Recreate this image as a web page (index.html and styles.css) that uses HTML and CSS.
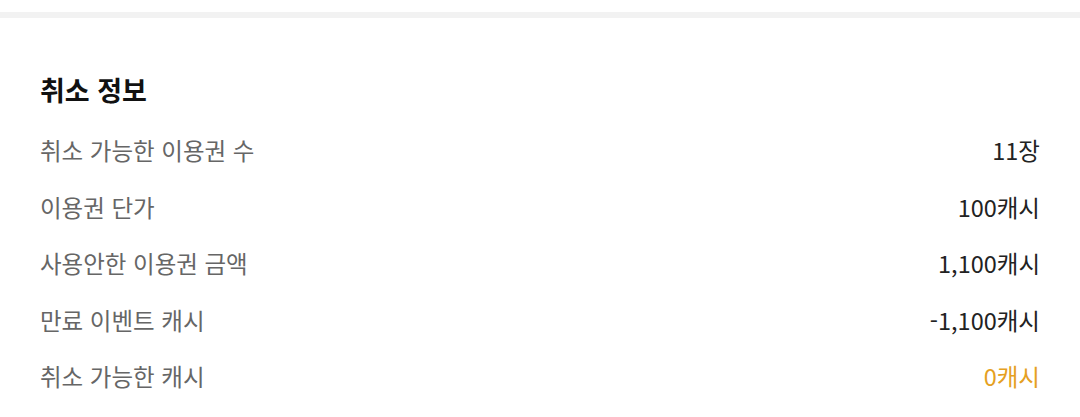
FILE: index.html
```html
<!DOCTYPE html>
<html lang="ko">
<head>
    <meta charset="UTF-8">
    <meta name="viewport" content="width=device-width, initial-scale=1.0">
    <title>취소 정보</title>
    <link rel="stylesheet" href="styles.css">
</head>
<body>
    <div class="divider"></div>
    <div class="section">
        <h2>취소 정보</h2>
        <div class="row">
            <span class="label">취소 가능한 이용권 수</span>
            <span class="value">11장</span>
        </div>
        <div class="row">
            <span class="label">이용권 단가</span>
            <span class="value">100캐시</span>
        </div>
        <div class="row">
            <span class="label">사용안한 이용권 금액</span>
            <span class="value">1,100캐시</span>
        </div>
        <div class="row">
            <span class="label">만료 이벤트 캐시</span>
            <span class="value">-1,100캐시</span>
        </div>
        <div class="row">
            <span class="label">취소 가능한 캐시</span>
            <span class="value highlight">0캐시</span>
        </div>
    </div>
</body>
</html>
```

FILE: styles.css
```css
body {
    margin: 0;
    background-color: #fff;
    font-family: "Noto Sans CJK KR", "Noto Sans", sans-serif;
}
.divider {
    height: 6px;
    margin-top: 12px;
    background-color: #f2f2f2;
}
.section {
    padding: 52px 40px 0;
}
h2 {
    margin: 0 0 12px;
    font-size: 27px;
    font-weight: 700;
    line-height: 40px;
    color: #111;
}
.row {
    display: flex;
    justify-content: space-between;
    align-items: center;
    height: 56.5px;
    font-size: 23.5px;
}
.label {
    color: #666;
}
.value {
    color: #222;
}
.highlight {
    color: #e5a022;
}
```
